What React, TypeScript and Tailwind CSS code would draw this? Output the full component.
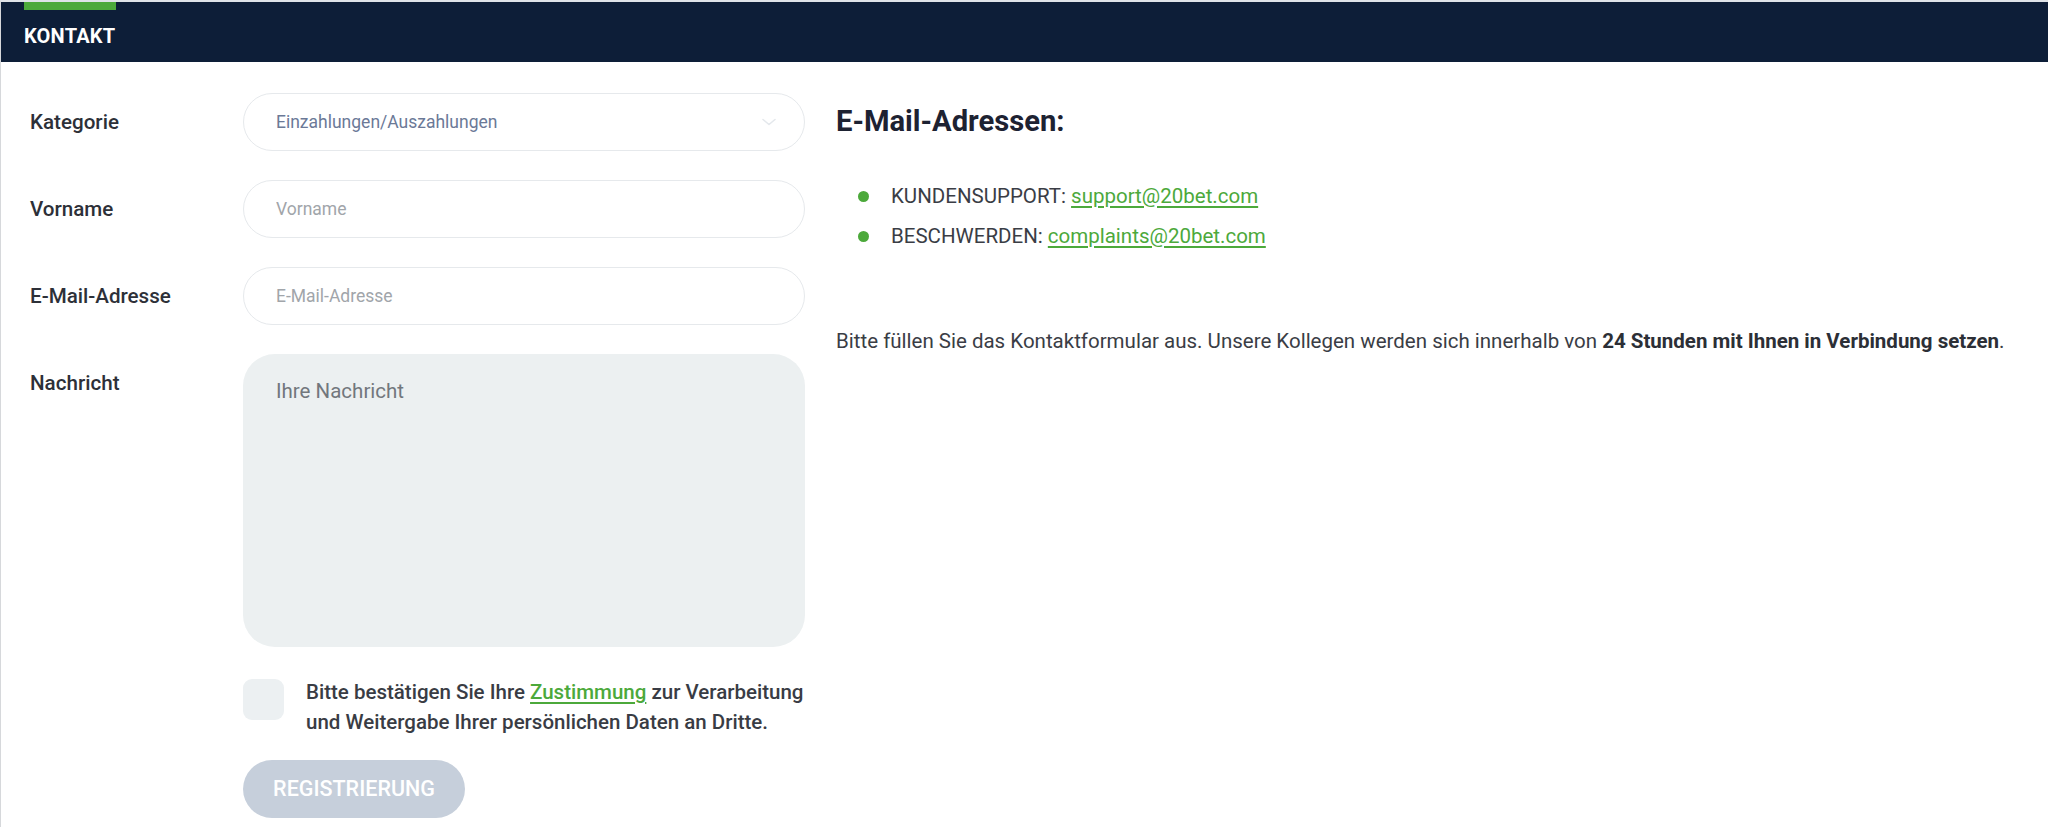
import React from "react";

const font = { fontFamily: "Roboto, 'Liberation Sans', Arial, sans-serif" };

function Label({ children }: { children: React.ReactNode }) {
  return (
    <div className="h-[58px] flex items-center text-[20.6px] font-medium text-[#2d3038]">
      {children}
    </div>
  );
}

export default function App() {
  return (
    <div
      className="min-h-[827px] w-full bg-white border-l border-[#d6d8db] border-t-2 border-t-[#dfe3e8]"
      style={font}
    >
      <div className="relative h-[60px] bg-[#0d1e38] flex items-center pl-[23px] pt-[8px]">
        <div className="absolute left-[23px] top-0 w-[92px] h-[8px] bg-[#4ca93b]" />
        <span className="text-white text-[20px] font-bold tracking-[0.2px]">KONTAKT</span>
      </div>

      <div className="flex">
        <div className="w-[835px] shrink-0 pl-[29px] pt-[31px]">
          <div className="grid grid-cols-[213px_562px] gap-y-[29px]">
            <Label>Kategorie</Label>
            <div className="relative h-[58px] rounded-full border border-[#e6e9ec] bg-white flex items-center pl-[32px] text-[17.5px] text-[#6b7997]">
              Einzahlungen/Auszahlungen
              <svg
                className="absolute right-[27px] top-1/2 -translate-y-1/2"
                width="16"
                height="9"
                viewBox="0 0 16 9"
                fill="none"
              >
                <path d="M2 2l6 5 6-5" stroke="#e4e8ec" strokeWidth="1.6" strokeLinecap="round" strokeLinejoin="round" />
              </svg>
            </div>

            <Label>Vorname</Label>
            <input
              placeholder="Vorname"
              className="h-[58px] rounded-full border border-[#e6e9ec] bg-white pl-[32px] text-[17.5px] outline-none placeholder:text-[#a1a5aa]"
            />

            <Label>E-Mail-Adresse</Label>
            <input
              placeholder="E-Mail-Adresse"
              className="h-[58px] rounded-full border border-[#e6e9ec] bg-white pl-[32px] text-[17.5px] outline-none placeholder:text-[#a1a5aa]"
            />

            <Label>Nachricht</Label>
            <textarea
              placeholder="Ihre Nachricht"
              className="h-[293px] resize-none rounded-[32px] bg-[#ecf0f1] pl-[33px] pt-[22px] text-[20.5px] outline-none placeholder:text-[#72777d]"
            />

            <div />
            <div className="flex items-start gap-[22px] pt-[1px]">
              <div className="w-[41px] h-[41px] shrink-0 rounded-[9px] bg-[#ecf0f2] mt-[2px]" />
              <p className="text-[20.5px] leading-[30px] font-medium text-[#393c44]">
                Bitte bestätigen Sie Ihre{" "}
                <a className="text-[#4ca93b] underline underline-offset-[3px]">Zustimmung</a> zur Verarbeitung
                und Weitergabe Ihrer persönlichen Daten an Dritte.
              </p>
            </div>

            <div />
            <div className="-mt-[6px]">
              <button className="h-[58px] w-[222px] rounded-full bg-[#c6cfdb] text-white text-[21.5px] font-medium">
                REGISTRIERUNG
              </button>
            </div>
          </div>
        </div>

        <div className="flex-1 pt-[42px]">
          <h2 className="text-[29.2px] leading-[34px] font-bold text-[#1d2232]">E-Mail-Adressen:</h2>
          <ul className="mt-[38px] pl-[22px]">
            <li className="flex items-center h-[40px] text-[20.5px] text-[#3a3d45]">
              <span className="w-[11px] h-[11px] rounded-full bg-[#4ca93b] mr-[22px]" />
              KUNDENSUPPORT:&nbsp;
              <a className="text-[#4ca93b] underline underline-offset-[3px]">support@20bet.com</a>
            </li>
            <li className="flex items-center h-[40px] text-[20.5px] text-[#3a3d45]">
              <span className="w-[11px] h-[11px] rounded-full bg-[#4ca93b] mr-[22px]" />
              BESCHWERDEN:&nbsp;
              <a className="text-[#4ca93b] underline underline-offset-[3px]">complaints@20bet.com</a>
            </li>
          </ul>
          <p className="mt-[70px] text-[20.5px] leading-[30px] text-[#3a3d45]">
            Bitte füllen Sie das Kontaktformular aus. Unsere Kollegen werden sich innerhalb von{" "}
            <b className="font-bold text-[#2c2f36]">24 Stunden mit Ihnen in Verbindung setzen</b>.
          </p>
        </div>
      </div>
    </div>
  );
}
